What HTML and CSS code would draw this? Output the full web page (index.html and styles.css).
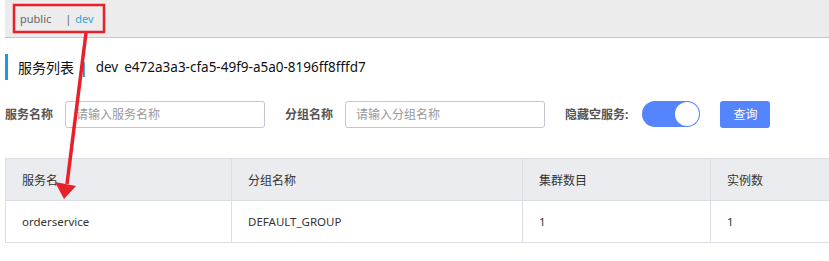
FILE: index.html
```html
<!DOCTYPE html>
<html>
<head>
    <link rel="stylesheet" href="styles.css">
</head>

<body>
    <div class="page">
        <div class="ns-bar">
            <span class="ns-item">public</span>
            <span class="ns-sep">|</span>
            <span class="ns-item active">dev</span>
        </div>

        <div class="title">
            <span class="title-text">服务列表</span>
            <span class="title-sep">|</span>
            <span class="title-ns">dev</span>
            <span class="title-id">e472a3a3-cfa5-49f9-a5a0-8196ff8fffd7</span>
        </div>

        <div class="search-row">
            <label class="field-label">服务名称</label>
            <input type="text" class="field-input" placeholder="请输入服务名称">
            <label class="field-label">分组名称</label>
            <input type="text" class="field-input" placeholder="请输入分组名称">
            <label class="field-label">隐藏空服务:</label>
            <div class="switch"><span class="knob"></span></div>
            <button class="query-btn">查询</button>
        </div>

        <div class="table-wrap">
            <table class="service-table">
                <colgroup>
                    <col class="col-name">
                    <col class="col-group">
                    <col class="col-cluster">
                    <col class="col-inst">
                </colgroup>
                <thead>
                    <tr>
                        <th>服务名</th>
                        <th>分组名称</th>
                        <th>集群数目</th>
                        <th>实例数</th>
                    </tr>
                </thead>
                <tbody>
                    <tr>
                        <td>orderservice</td>
                        <td>DEFAULT_GROUP</td>
                        <td>1</td>
                        <td>1</td>
                    </tr>
                </tbody>
            </table>
        </div>
    </div>

    <!-- annotation drawn over the screenshot -->
    <svg class="annotation" viewBox="0 0 829 261" xmlns="http://www.w3.org/2000/svg">
        <rect x="14" y="5" width="90" height="27" fill="none" stroke="#e8202a" stroke-width="2.5"></rect>
        <line x1="86" y1="33" x2="67" y2="184" stroke="#e8202a" stroke-width="3.5"></line>
        <polygon points="55,182 76,186 64,199" fill="#e8202a"></polygon>
    </svg>
</body>
</html>
```

FILE: styles.css
```css
:root {
    --primary: #5584ff;
    --text: #333333;
    --label: #555555;
    --border: #dcdee3;
    --input-border: #c4c6cf;
    --header-bg: #ebecf0;
}

body {
    width: 829px;
    height: 261px;
    margin: 0;
    overflow: hidden;
    position: relative;
    font-family: 'Noto Sans', 'Noto Sans CJK SC', sans-serif;
    color: var(--text);
    background: #fff;
}

.page {
    margin-left: 5px;
}

.ns-bar {
    height: 37px;
    display: flex;
    align-items: center;
    padding-left: 15px;
    background: #ececec;
    border-bottom: 1px solid #c8c8c8;
    font-size: 11px;
    color: #666;
}

.ns-sep {
    margin: 0 4px 0 14px;
    color: #666;
}

.ns-item.active {
    color: #2fa6dc;
}

.title {
    display: flex;
    align-items: center;
    height: 26px;
    margin-top: 16px;
    padding-left: 10px;
    border-left: 3px solid #1a9ad6;
    font-size: 14px;
    color: #111;
}

.title-sep {
    margin: 0 8px 0 6px;
}

.title-ns,
.title-id {
    font-size: 13.5px;
}

.title-id {
    margin-left: 6px;
}

.search-row {
    display: flex;
    align-items: center;
    margin-top: 20px;
    height: 28px;
}

.field-label {
    font-size: 12px;
    font-weight: 700;
    color: var(--label);
    margin-right: 12px;
}

.field-input {
    width: 200px;
    height: 27px;
    box-sizing: border-box;
    padding: 0 10px;
    margin-right: 20px;
    border: 1px solid var(--input-border);
    border-radius: 3px;
    font-family: inherit;
    font-size: 12px;
    color: var(--text);
}

.field-input::placeholder {
    color: #999;
}

.switch {
    position: relative;
    width: 58px;
    height: 26px;
    margin-left: 2px;
    margin-right: 20px;
    border-radius: 13px;
    background: var(--primary);
}

.knob {
    position: absolute;
    top: 1px;
    right: 1px;
    width: 24px;
    height: 24px;
    border-radius: 50%;
    background: #fff;
}

.query-btn {
    width: 50px;
    height: 27px;
    border: none;
    border-radius: 3px;
    background: var(--primary);
    color: #fff;
    font-family: inherit;
    font-size: 12px;
}

/* table runs off the right edge in the screenshot */
.table-wrap {
    margin-top: 30px;
    width: 824px;
    overflow: hidden;
}

.service-table {
    width: 900px;
    border-collapse: collapse;
    table-layout: fixed;
    font-size: 11.5px;
}

.service-table th,
.service-table td {
    height: 41px;
    padding: 0 0 0 16px;
    border: 1px solid var(--border);
    text-align: left;
    font-weight: 400;
    color: var(--text);
}

.service-table th {
    background: var(--header-bg);
    font-size: 12px;
}

.col-name { width: 226px; }
.col-group { width: 291px; }
.col-cluster { width: 188px; }
.col-inst { width: 195px; }

.annotation {
    position: absolute;
    top: 0;
    left: 0;
    width: 829px;
    height: 261px;
    pointer-events: none;
}
```
